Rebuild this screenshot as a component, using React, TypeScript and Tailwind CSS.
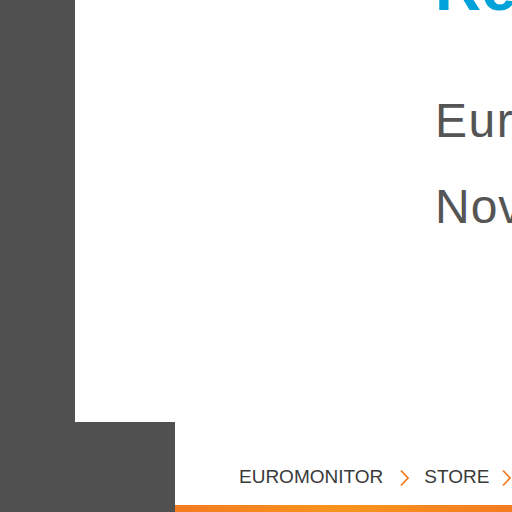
function Chevron() {
  return (
    <svg width="11" height="18" viewBox="0 0 11 18" fill="none" className="shrink-0">
      <path d="M2 1.5 L9 9 L2 16.5" stroke="#f47b20" strokeWidth="1.8" />
    </svg>
  );
}

export default function App() {
  return (
    <div className="flex h-[512px] w-[512px] flex-col overflow-hidden bg-[#505050] font-['Liberation_Sans',Arial,sans-serif]">
      {/* top hero panel */}
      <div className="flex h-[422px]">
        <div className="w-[75px] shrink-0" />
        <div className="flex-1 overflow-hidden bg-white pl-[360px]">
          <div className="-mt-[44px] whitespace-nowrap text-[64px] font-bold leading-none text-[#00a3d9]">
            Retail Report
          </div>
          <div className="mt-[77px] whitespace-nowrap text-[48px] leading-none tracking-[1.5px] text-[#555]">
            Euromonitor International
          </div>
          <div className="mt-[38px] whitespace-nowrap text-[48px] leading-none tracking-[1px] text-[#555]">
            November 2019
          </div>
        </div>
      </div>

      {/* breadcrumb row */}
      <div className="flex flex-1">
        <div className="w-[175px] shrink-0" />
        <div className="flex flex-1 flex-col bg-white">
          <div className="flex flex-1 items-center whitespace-nowrap pl-[64px] pt-[28px] text-[19px] uppercase text-[#3a3a3a]">
            <span>Euromonitor</span>
            <span className="ml-[16px] mr-[14px]"><Chevron /></span>
            <span>Store</span>
            <span className="ml-[12px]"><Chevron /></span>
          </div>
          <div className="h-[7px] bg-gradient-to-r from-[#f47b20] via-[#f7941d] to-[#f47b20]" />
        </div>
      </div>
    </div>
  );
}
